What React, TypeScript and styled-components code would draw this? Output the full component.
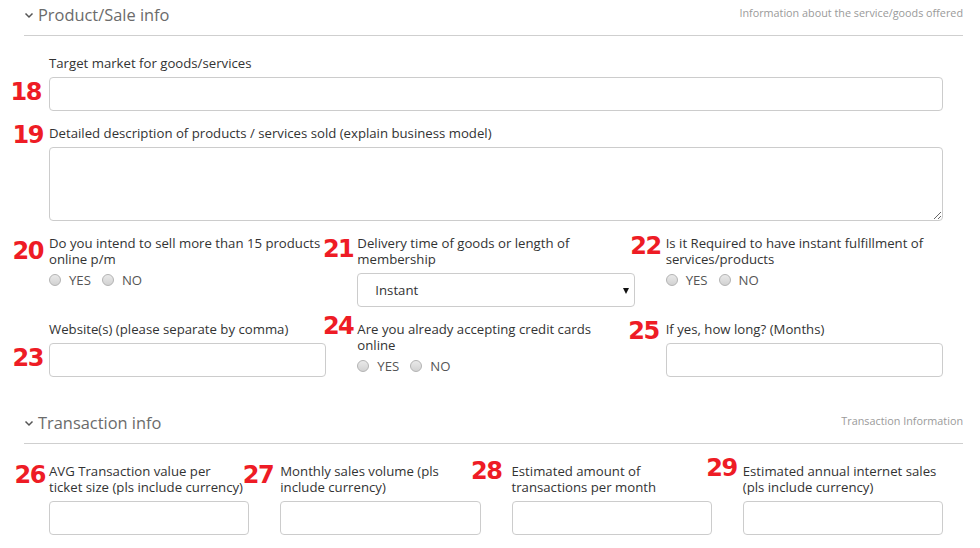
import React from 'react'
import styled, { createGlobalStyle } from 'styled-components'

const GlobalStyle = createGlobalStyle`
  body {
    margin: 0;
    background: #fff;
    font-family: 'Open Sans', 'Liberation Sans', sans-serif;
  }
  * { box-sizing: border-box; }
`

const Page = styled.div`
  padding: 0 17px 0 24px;
`

const Section = styled.section`
  & + & {
    margin-top: 31px;
  }
`

const SectionHead = styled.div`
  display: flex;
  justify-content: space-between;
  align-items: flex-start;
  height: 36px;
  border-bottom: 1px solid #cfcfcf;
`

const Title = styled.h3`
  margin: 4px 0 0;
  display: flex;
  align-items: center;
  gap: 4px;
  font-weight: 400;
  font-size: 16.4px;
  line-height: 22px;
  color: #6b6b6b;
`

const Hint = styled.span`
  margin-top: 6px;
  font-size: 10.8px;
  line-height: 14px;
  color: #9a9a9a;
`

const Body = styled.div`
  display: flex;
  flex-direction: column;
  gap: 14px;
  padding: 19px 20px 0 25px;
`

const Grid = styled.div<{ $cols: number }>`
  display: grid;
  grid-template-columns: repeat(${p => p.$cols}, 1fr);
  align-items: start;
  column-gap: 31px;
  row-gap: 14px;
`

const Field = styled.div`
  position: relative;
`

const Label = styled.label<{ $max?: number }>`
  display: block;
  max-width: ${p => (p.$max ? `${p.$max}px` : 'none')};
  font-size: 13.2px;
  line-height: 16px;
  color: #333;
  margin-bottom: 6px;
`

const Num = styled.span<{ $top: number; $gap: number }>`
  position: absolute;
  right: calc(100% + ${p => p.$gap}px);
  top: ${p => p.$top}px;
  font-family: 'DejaVu Sans', sans-serif;
  font-weight: 700;
  font-size: 24px;
  line-height: 26px;
  letter-spacing: -1.5px;
  color: #ee1c25;
`

const TextInput = styled.input`
  display: block;
  width: 100%;
  height: 34px;
  border: 1px solid #cccccc;
  border-radius: 4px;
  padding: 0 10px;
  font: inherit;
  font-size: 13px;
`

const TextArea = styled.textarea`
  display: block;
  width: 100%;
  height: 74px;
  border: 1px solid #cccccc;
  border-radius: 4px;
  resize: vertical;
  font: inherit;
  font-size: 13px;
`

const SelectBox = styled.div`
  position: relative;
  height: 34px;
  border: 1px solid #cccccc;
  border-radius: 4px;
  display: flex;
  align-items: center;
  padding-left: 17px;
  font-size: 13.2px;
  color: #333;
  &::after {
    content: '';
    position: absolute;
    right: 5px;
    top: 14px;
    border-left: 3.5px solid transparent;
    border-right: 3.5px solid transparent;
    border-top: 6px solid #111;
  }
`

const Radios = styled.div`
  display: flex;
  align-items: center;
  margin-top: -1px;
  height: 16px;
`

const RadioItem = styled.span`
  display: inline-flex;
  align-items: center;
  gap: 8px;
  font-size: 13.2px;
  color: #555;
  margin-right: 11px;
`

const Dot = styled.span`
  width: 12px;
  height: 12px;
  border-radius: 50%;
  border: 1px solid #b3b3b3;
  background: linear-gradient(#e9e9e9, #d2d2d2);
`

const Chevron = () => (
  <svg width="10" height="7" viewBox="0 0 10 7">
    <path d="M1.5 1.5 L5 5 L8.5 1.5" fill="none" stroke="#555" strokeWidth="1.5" />
  </svg>
)

const YesNo = () => (
  <Radios>
    <RadioItem><Dot />YES</RadioItem>
    <RadioItem><Dot />NO</RadioItem>
  </Radios>
)

const Mark = ({ n, top, gap }: { n: number; top: number; gap: number }) => (
  <Num $top={top} $gap={gap}>{n}</Num>
)

export default function App() {
  return (
    <Page>
      <GlobalStyle />
      <Section>
        <SectionHead>
          <Title><Chevron />Product/Sale info</Title>
          <Hint>Information about the service/goods offered</Hint>
        </SectionHead>
        <Body>
          <Field>
            <Mark n={18} top={24} gap={8} />
            <Label>Target market for goods/services</Label>
            <TextInput />
          </Field>
          <Field>
            <Mark n={19} top={-3} gap={6} />
            <Label>Detailed description of products / services sold (explain business model)</Label>
            <TextArea />
          </Field>
          <Grid $cols={3}>
            <Field>
              <Mark n={20} top={3} gap={6} />
              <Label>Do you intend to sell more than 15 products online p/m</Label>
              <YesNo />
            </Field>
            <Field>
              <Mark n={21} top={1} gap={4} />
              <Label>Delivery time of goods or length of membership</Label>
              <SelectBox>Instant</SelectBox>
            </Field>
            <Field>
              <Mark n={22} top={-2} gap={5} />
              <Label>Is it Required to have instant fulfillment of services/products</Label>
              <YesNo />
            </Field>
            <Field>
              <Mark n={23} top={24} gap={6} />
              <Label>Website(s) (please separate by comma)</Label>
              <TextInput />
            </Field>
            <Field>
              <Mark n={24} top={-8} gap={4} />
              <Label $max={255}>Are you already accepting credit cards online</Label>
              <YesNo />
            </Field>
            <Field>
              <Mark n={25} top={-3} gap={7} />
              <Label>If yes, how long? (Months)</Label>
              <TextInput />
            </Field>
          </Grid>
        </Body>
      </Section>
      <Section>
        <SectionHead>
          <Title><Chevron />Transaction info</Title>
          <Hint>Transaction Information</Hint>
        </SectionHead>
        <Body>
          <Grid $cols={4}>
            <Field>
              <Mark n={26} top={-1} gap={4} />
              <Label $max={194}>AVG Transaction value per ticket size (pls include currency)</Label>
              <TextInput />
            </Field>
            <Field>
              <Mark n={27} top={-1} gap={7} />
              <Label>Monthly sales volume (pls include currency)</Label>
              <TextInput />
            </Field>
            <Field>
              <Mark n={28} top={-5} gap={10} />
              <Label>Estimated amount of transactions per month</Label>
              <TextInput />
            </Field>
            <Field>
              <Mark n={29} top={-8} gap={6} />
              <Label>Estimated annual internet sales (pls include currency)</Label>
              <TextInput />
            </Field>
          </Grid>
        </Body>
      </Section>
    </Page>
  )
}
